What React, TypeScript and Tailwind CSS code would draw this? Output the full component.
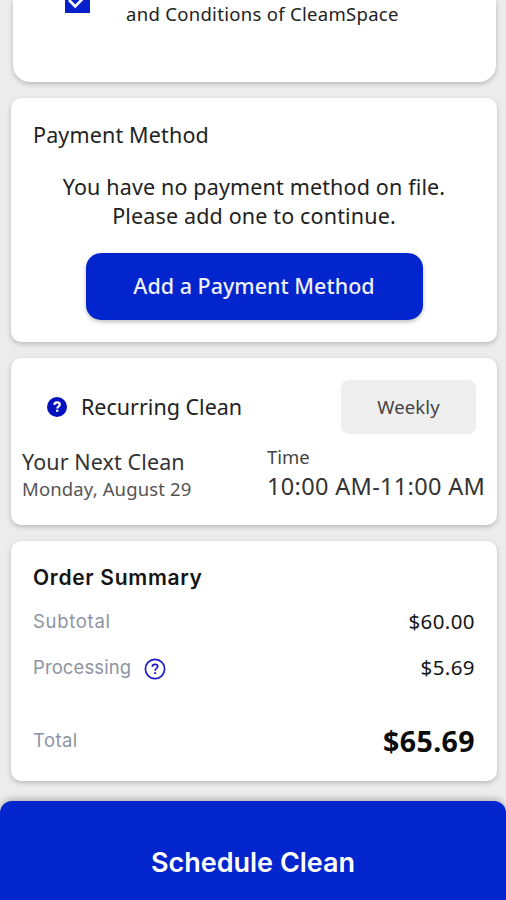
import type { ReactNode } from 'react'

const cardClass = 'bg-white rounded-[10px] shadow-[0_2px_5px_rgba(0,0,0,0.22)]'

type SummaryRowProps = {
  label: ReactNode
  value: string
  icon?: ReactNode
}

function CheckedBox() {
  return (
    <svg viewBox="0 0 25 25" className="-mt-[12px] ml-[52px] size-[25px] shrink-0">
      <rect width="25" height="25" rx="0.5" fill="#0620c9" />
      <path d="M4 12l6.2 6.4L18.4 10" fill="none" stroke="#fff" strokeWidth="2.7" />
    </svg>
  )
}

function HelpFilled() {
  return (
    <svg viewBox="0 0 20 20" className="size-5">
      <circle cx="10" cy="10" r="10" fill="#0210bd" />
      <path
        d="M7.3 7.8C7.5 6 8.6 5.3 10.1 5.3c1.6 0 2.7.8 2.7 2.1 0 1.9-2.5 1.9-2.5 4"
        fill="none"
        stroke="#fff"
        strokeWidth="2.2"
      />
      <rect x="9.1" y="12.7" width="2.3" height="2.1" fill="#fff" />
    </svg>
  )
}

function HelpOutline() {
  return (
    <svg viewBox="0 0 22 22" className="mt-[3px] size-[22px]" fill="none" stroke="#1b19c4">
      <circle cx="11" cy="11" r="9.6" strokeWidth="1.7" />
      <path d="M8.3 8.7C8.4 7.1 9.5 6.3 11 6.3c1.6 0 2.7.9 2.7 2.2 0 1.9-2.6 2-2.6 4.2" strokeWidth="1.7" />
      <path d="M11.1 14.2v1.8" strokeWidth="1.9" />
    </svg>
  )
}

function SummaryRow({ label, value, icon }: SummaryRowProps) {
  return (
    <div className="flex h-[46px] items-center justify-between">
      <div className="flex items-center gap-[13px]">
        <span className="font-['Inter','Noto_Sans',sans-serif] text-[18.5px] leading-6 text-[#8d94a3]">
          {label}
        </span>
        {icon}
      </div>
      <span className="-mt-px text-[20.5px] leading-6 tracking-[0.4px] text-[#151515]">{value}</span>
    </div>
  )
}

export default function App() {
  return (
    <div className="flex h-[900px] w-[506px] flex-col overflow-hidden bg-[#ececec] font-['Noto_Sans','Open_Sans',sans-serif] text-[#222]">
      <div className="flex flex-col gap-4 pr-[9px] pl-[11px]">
        <section className="mr-px ml-0.5 flex h-[82px] rounded-b-[17px] bg-white shadow-[0_2px_5px_rgba(0,0,0,0.22)]">
          <CheckedBox />
          <p className="mt-[2px] ml-[36px] text-[18.5px] leading-6 tracking-[0.3px] whitespace-nowrap">
            and Conditions of CleamSpace
          </p>
        </section>

        <section className={`${cardClass} h-[244px] px-[22px] pt-6`}>
          <h2 className="text-[21.5px] leading-[26px] tracking-[0.15px] whitespace-nowrap">Payment Method</h2>
          <p className="mt-6 text-center text-[21.5px] leading-[29px] tracking-[0.15px] whitespace-nowrap">
            You have no payment method on file.
            <br />
            Please add one to continue.
          </p>
          <button className="mx-auto mt-[23px] block h-[67px] w-[337px] rounded-[15px] bg-[#0225cd] text-[21.5px] font-medium whitespace-nowrap text-[#eef0ff] shadow-[0_2px_4px_rgba(0,0,0,0.25)]">
            Add a Payment Method
          </button>
        </section>

        <section className={`${cardClass} h-[167px] px-[11px]`}>
          <div className="flex h-[76px] items-end justify-between pr-[10px] pl-[25px]">
            <div className="flex h-[54px] items-center gap-[14px]">
              <HelpFilled />
              <span className="text-[21.5px] leading-7 whitespace-nowrap">Recurring Clean</span>
            </div>
            <button className="h-[54px] w-[135px] rounded-[8px] bg-[#eee] text-[18.5px] tracking-[0.1px] text-[#444]">
              Weekly
            </button>
          </div>
          <div className="flex text-[#333]">
            <div className="w-[245px] shrink-0 pt-[14px]">
              <p className="text-[21.5px] leading-7 tracking-[0.1px] whitespace-nowrap">Your Next Clean</p>
              <p className="-mt-px text-[18.5px] leading-7 tracking-[0.13px] whitespace-nowrap text-[#555]">
                Monday, August 29
              </p>
            </div>
            <div className="pt-[11px]">
              <p className="text-[18.5px] leading-6 text-[#444]">Time</p>
              <p className="mt-[3px] text-[23.5px] leading-7 tracking-[0.33px] whitespace-nowrap">
                10:00 AM-11:00 AM
              </p>
            </div>
          </div>
        </section>

        <section className={`${cardClass} h-[240px] px-[22px] pt-[23px]`}>
          <h2 className="font-['Inter','Noto_Sans',sans-serif] text-[21px] leading-7 font-semibold tracking-[0.7px] text-[#151515]">
            Order Summary
          </h2>
          <div className="mt-[6px]">
            <SummaryRow label={<span className="tracking-[0.7px]">Subtotal</span>} value="$60.00" />
            <SummaryRow
              label={<span className="tracking-[0.1px]">Processing</span>}
              value="$5.69"
              icon={<HelpOutline />}
            />
          </div>
          <div className="mt-[31px] flex h-10 items-center justify-between">
            <span className="font-['Inter','Noto_Sans',sans-serif] text-[18.5px] tracking-[0.4px] text-[#8d94a3]">
              Total
            </span>
            <span className="text-[28.5px] font-bold tracking-[0.4px] text-[#0c0c0c]">$65.69</span>
          </div>
        </section>
      </div>

      <button className="mt-5 h-[99px] shrink-0 rounded-t-[12px] bg-[#0225cd] pt-[25px] font-['Inter','Noto_Sans',sans-serif] text-[27px] font-semibold text-white shadow-[0_-2px_6px_rgba(0,0,0,0.25)]">
        Schedule Clean
      </button>
    </div>
  )
}
